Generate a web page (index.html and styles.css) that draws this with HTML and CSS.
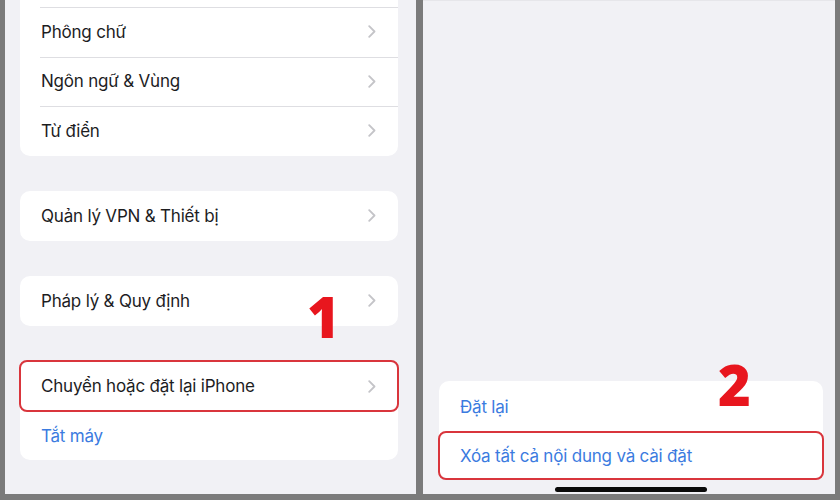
FILE: index.html
```html
<!DOCTYPE html>
<html lang="vi">
<head>
    <meta charset="UTF-8">
    <meta name="viewport" content="width=device-width, initial-scale=1.0">
    <title>Cài đặt chung</title>
    <link rel="stylesheet" href="styles.css">
</head>
<body>
    <div class="frame">
        <!-- Left screen: Cài đặt chung -->
        <section class="pane pane-left">
            <div class="group group-top">
                <div class="row row-hidden"></div>
                <div class="row"><span class="label">Phông chữ</span><svg class="chev" width="8" height="13" viewBox="0 0 8 13"><path d="M1.2 1.2L6.5 6.5L1.2 11.8"/></svg></div>
                <div class="row"><span class="label">Ngôn ngữ &amp; Vùng</span><svg class="chev" width="8" height="13" viewBox="0 0 8 13"><path d="M1.2 1.2L6.5 6.5L1.2 11.8"/></svg></div>
                <div class="row"><span class="label">Từ điển</span><svg class="chev" width="8" height="13" viewBox="0 0 8 13"><path d="M1.2 1.2L6.5 6.5L1.2 11.8"/></svg></div>
            </div>

            <div class="group">
                <div class="row"><span class="label">Quản lý VPN &amp; Thiết bị</span><svg class="chev" width="8" height="13" viewBox="0 0 8 13"><path d="M1.2 1.2L6.5 6.5L1.2 11.8"/></svg></div>
            </div>

            <div class="group">
                <div class="row"><span class="label">Pháp lý &amp; Quy định</span><svg class="chev" width="8" height="13" viewBox="0 0 8 13"><path d="M1.2 1.2L6.5 6.5L1.2 11.8"/></svg></div>
            </div>

            <div class="group">
                <div class="row row-marked"><span class="label">Chuyển hoặc đặt lại iPhone</span><svg class="chev" width="8" height="13" viewBox="0 0 8 13"><path d="M1.2 1.2L6.5 6.5L1.2 11.8"/></svg></div>
                <div class="row row-action row-last"><span class="label">Tắt máy</span></div>
            </div>

            <span class="step step-one">1</span>
        </section>

        <!-- Right screen: reset action sheet -->
        <section class="pane pane-right">
            <div class="sheet">
                <div class="row row-action row-reset"><span class="label">Đặt lại</span></div>
                <div class="row row-action row-erase row-marked"><span class="label">Xóa tất cả nội dung và cài đặt</span></div>
            </div>
            <div class="home-bar"></div>

            <span class="step step-two">2</span>
        </section>
    </div>
</body>
</html>
```

FILE: styles.css
```css
html,
body {
    margin: 0;
    height: 100%;
}

body {
    font-family: 'Inter', 'Noto Sans', sans-serif;
    background-color: #7b7b7b;
    color: #1d1d1f;
}

.frame {
    display: flex;
    gap: 7px;
    height: 500px;
    padding: 0 5px 6px 5px;
    box-sizing: border-box;
}

.pane {
    position: relative;
    height: 494px;
    background-color: #f1f1f5;
    overflow: hidden;
}

.pane-left {
    width: 411px;
    display: flex;
    flex-direction: column;
    gap: 35.5px;
}

.pane-right {
    width: 412px;
    display: flex;
    flex-direction: column;
    justify-content: flex-end;
    border-top: 1px solid #e6e6ea;
    box-sizing: border-box;
}

/* Grouped list cards */
.group {
    margin: 0 18px 0 15px;
    background-color: #fff;
    border-radius: 10px;
}

.group-top {
    margin-top: -42.5px;
}

.row {
    position: relative;
    display: flex;
    align-items: center;
    justify-content: space-between;
    height: 49.5px;
    padding: 0 22px 0 21px;
    box-sizing: border-box;
    font-size: 17px;
    letter-spacing: -0.2px;
}

.row-hidden {
    height: 49.5px;
}

.group .row + .row::before {
    content: "";
    position: absolute;
    top: 0;
    left: 20px;
    right: 0;
    border-top: 1px solid #dedee2;
}

.row-last {
    height: 49px;
}

.chev {
    fill: none;
    stroke: #c4c4c8;
    stroke-width: 1.8;
    stroke-linecap: round;
    stroke-linejoin: round;
}

.row-action {
    color: #3b7be0;
}

.row-marked {
    height: 50px;
    outline: 2px solid #d9353c;
    outline-offset: -1px;
    border-radius: 7px;
}

.group .row-marked + .row::before {
    display: none;
}

/* Action sheet on the right */
.sheet {
    margin: 0 12px 0 16px;
    background-color: #fff;
    border-radius: 10px;
}

.row-reset {
    height: 51px;
}

.row-erase {
    height: 47px;
}

.home-bar {
    align-self: center;
    width: 152px;
    height: 5px;
    margin: 8px 0 2px 4px;
    border-radius: 3px;
    background-color: #0a0a0a;
}

/* Red step numbers drawn over the screenshot */
.step {
    position: absolute;
    font-family: 'Open Sans', sans-serif;
    font-weight: 800;
    font-size: 56px;
    line-height: 1;
    color: #e8161e;
}

.step-one {
    left: 302px;
    top: 288px;
}

.step-two {
    left: 295px;
    top: 355px;
}
```
